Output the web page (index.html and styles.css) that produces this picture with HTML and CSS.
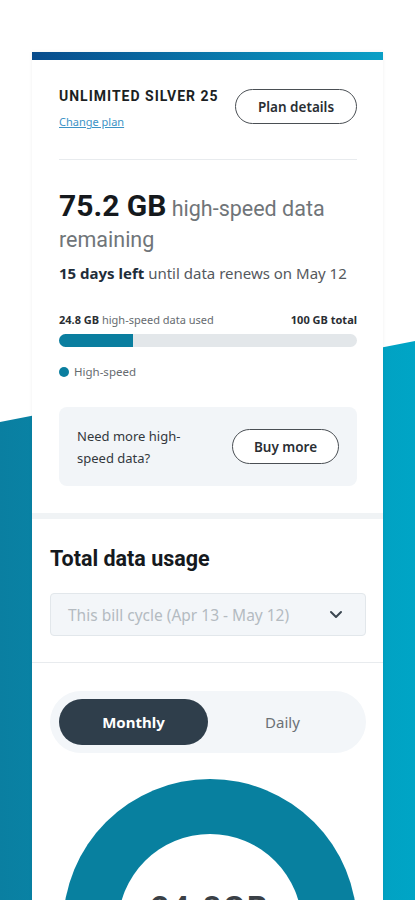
FILE: index.html
```html
<!DOCTYPE html>
<html>
<head>
  <meta charset="UTF-8">
  <title>Data usage</title>
  <link rel="stylesheet" href="styles.css">
</head>
<body>
  <div class="page">
    <div class="card">
      <div class="card-bar"></div>

      <div class="usage">
        <div class="plan-head">
          <div>
            <div class="plan-name">UNLIMITED SILVER 25</div>
            <a class="plan-link" href="#">Change plan</a>
          </div>
          <button class="btn-outline btn-plan">Plan details</button>
        </div>

        <div class="divider"></div>

        <div class="remaining">
          <span class="remaining-num">75.2 GB</span> high-speed data remaining
        </div>
        <div class="days"><b>15 days left</b> until data renews on May 12</div>

        <div class="bar-labels">
          <span><b>24.8 GB</b> high-speed data used</span>
          <b>100 GB total</b>
        </div>
        <div class="progress">
          <div class="progress-fill" style="width: 24.8%"></div>
        </div>
        <div class="legend"><span class="legend-dot"></span>High-speed</div>

        <div class="buy-box">
          <div class="buy-text">Need more high-<br>speed data?</div>
          <button class="btn-outline btn-buy">Buy more</button>
        </div>
      </div>

      <div class="band"></div>

      <div class="total">
        <h2 class="total-title">Total data usage</h2>
        <div class="select">
          <span>This bill cycle (Apr 13 - May 12)</span>
          <svg width="14" height="9" viewBox="0 0 14 9"><path d="M2 2l5 5 5-5" fill="none" stroke="#3a4650" stroke-width="2" stroke-linecap="round" stroke-linejoin="round"/></svg>
        </div>
      </div>

      <div class="line"></div>

      <div class="chart">
        <div class="toggle">
          <div class="toggle-item active">Monthly</div>
          <div class="toggle-item">Daily</div>
        </div>
        <div class="donut">
          <div class="donut-hole">
            <span class="donut-value">24.8GB</span>
          </div>
        </div>
      </div>
    </div>
  </div>
</body>
</html>
```

FILE: styles.css
```css
* {
  box-sizing: border-box;
}

body {
  margin: 0;
  background: #fff;
  font-family: "Noto Sans", "Open Sans", sans-serif;
  color: #2b2f33;
  overflow: hidden;
}

.page {
  position: relative;
  height: 900px;
  padding-top: 52px;
  overflow: hidden;
}

/* blue slanted backdrop */
.page::before {
  content: "";
  position: absolute;
  left: 0;
  right: 0;
  top: 0;
  bottom: 0;
  background: linear-gradient(to right, #0a7fa1, #00a5c6);
  clip-path: polygon(0 422px, 100% 341px, 100% 100%, 0 100%);
}

.card {
  position: relative;
  width: 351px;
  margin-left: 32px;
  background: #fff;
  box-shadow: 0 0 4px rgba(0, 0, 0, 0.06);
}

.card-bar {
  height: 8px;
  background: linear-gradient(to right, #074b8c, #0a9fc6);
}

.usage {
  padding: 29px 26px 27px 27px;
}

.plan-head {
  display: flex;
  justify-content: space-between;
  align-items: flex-start;
}

.plan-name {
  font-family: Roboto, sans-serif;
  font-weight: 700;
  font-size: 14px;
  letter-spacing: 1px;
  color: #1b1f23;
  line-height: 16px;
  margin-top: -1px;
}

.plan-link {
  display: inline-block;
  margin-top: 11px;
  font-size: 11px;
  color: #3c93c6;
  text-decoration: underline;
  line-height: 14px;
}

.btn-outline {
  background: #fff;
  border: 1px solid #4a4f54;
  border-radius: 20px;
  font-family: "Noto Sans", sans-serif;
  font-weight: 600;
  font-size: 13.5px;
  color: #2a2e33;
  padding: 0;
}

.btn-plan {
  width: 122px;
  height: 35px;
}

.divider {
  height: 1px;
  background: #e8ebee;
  margin: 28px 0 0;
}

.remaining {
  margin-top: 30px;
  font-family: Roboto, sans-serif;
  font-size: 21.5px;
  line-height: 31px;
  color: #707579;
}

.remaining-num {
  font-size: 30px;
  font-weight: 700;
  color: #15191d;
}

.days {
  margin-top: 8px;
  font-size: 15px;
  color: #55595e;
}

.days b {
  color: #1f2d3a;
}

.bar-labels {
  display: flex;
  justify-content: space-between;
  margin-top: 29px;
  font-size: 11px;
  color: #666b70;
}

.bar-labels b {
  color: #2a2e33;
}

.progress {
  margin-top: 7px;
  height: 13px;
  border-radius: 7px;
  background: #e3e7ea;
  overflow: hidden;
}

.progress-fill {
  height: 100%;
  background: #0a7e9f;
}

.legend {
  display: flex;
  align-items: center;
  margin-top: 17px;
  font-size: 11.5px;
  color: #666b70;
}

.legend-dot {
  width: 10px;
  height: 10px;
  border-radius: 50%;
  background: #0a7e9f;
  margin-right: 5px;
}

.buy-box {
  display: flex;
  justify-content: space-between;
  align-items: center;
  margin-top: 28px;
  height: 79px;
  padding: 0 18px;
  background: #f2f5f8;
  border-radius: 8px;
}

.buy-text {
  font-size: 13px;
  line-height: 22px;
  color: #33383d;
}

.btn-buy {
  width: 107px;
  height: 35px;
}

.band {
  height: 6px;
  background: #f0f3f5;
}

.total {
  padding: 28px 17px 26px 18px;
}

.total-title {
  margin: 0;
  font-family: Roboto, sans-serif;
  font-size: 21.5px;
  font-weight: 700;
  color: #15191d;
  line-height: 24px;
}

.select {
  display: flex;
  justify-content: space-between;
  align-items: center;
  margin-top: 22px;
  height: 43px;
  padding: 0 22px 0 17px;
  background: #f3f6f9;
  border: 1px solid #e2e7eb;
  border-radius: 4px;
  font-size: 15.5px;
  color: #b4bbc1;
}

.line {
  height: 1px;
  background: #e8ebee;
}

.chart {
  padding: 28px 17px 0 18px;
}

.toggle {
  display: flex;
  height: 62px;
  padding: 8px 9px;
  background: #f3f6f9;
  border-radius: 31px;
}

.toggle-item {
  flex: 1;
  display: flex;
  align-items: center;
  justify-content: center;
  font-size: 15px;
  color: #6c7176;
  border-radius: 23px;
}

.toggle-item.active {
  flex: 0 0 149px;
  background: #2f3e4b;
  color: #fff;
  font-weight: 700;
}

.donut {
  width: 294px;
  height: 294px;
  margin: 26px 0 0 13px;
  border-radius: 50%;
  background: #08809f;
  display: flex;
  align-items: center;
  justify-content: center;
}

.donut-hole {
  width: 184px;
  height: 184px;
  border-radius: 50%;
  background: #fff;
  display: flex;
  justify-content: center;
  padding-top: 54px;
}

.donut-value {
  font-family: Roboto, sans-serif;
  font-size: 32px;
  font-weight: 700;
  color: #3a4046;
  letter-spacing: 2px;
}
```
